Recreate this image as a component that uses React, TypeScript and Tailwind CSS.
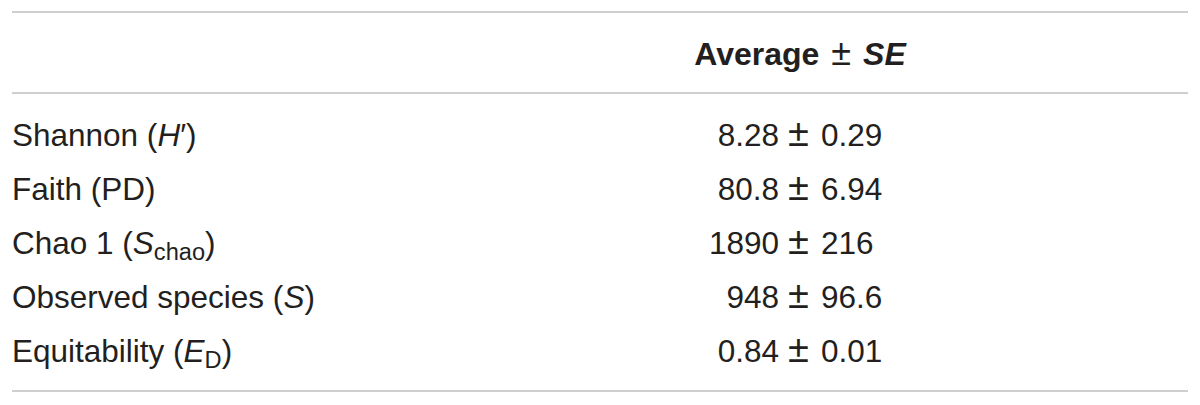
const rows = [
  { label: <>Shannon (<i>H</i>′)</>, mean: '8.28', se: '0.29' },
  { label: <>Faith (PD)</>, mean: '80.8', se: '6.94' },
  { label: <>Chao 1 (<i>S</i><sub>chao</sub>)</>, mean: '1890', se: '216' },
  { label: <>Observed species (<i>S</i>)</>, mean: '948', se: '96.6' },
  { label: <>Equitability (<i>E</i><sub>D</sub>)</>, mean: '0.84', se: '0.01' }
]

export default function App () {
  return (
    <div className="min-h-[405px] bg-white px-3 pt-[11px] text-[#231f20]" style={{ fontFamily: '"Liberation Sans", Arial, sans-serif' }}>
      <div className="border-t-2 border-b-2 border-[#cfcfcf]">
        <div className="grid h-[79px] grid-cols-[588px_400px_1fr] items-center">
          <div />
          <div className="flex items-baseline justify-center text-[32px] font-bold">
            <span>Average</span>
            <span className="mx-[12px] text-[36px] font-normal">±</span>
            <i>SE</i>
          </div>
          <div />
        </div>
      </div>

      <div className="border-b-2 border-[#cfcfcf] pt-[12px] pb-[14px]">
        {rows.map((row, i) => (
          <div key={i} className="grid h-[54px] grid-cols-[588px_400px_1fr] items-baseline text-[31.5px] leading-[54px]">
            <div>{row.label}</div>
            <div className="grid grid-cols-[1fr_auto_1fr] items-baseline">
              <span className="text-right">{row.mean}</span>
              <span className="pl-[9px] pr-[12px] text-[38px]">±</span>
              <span>{row.se}</span>
            </div>
            <div />
          </div>
        ))}
      </div>
    </div>
  )
}
